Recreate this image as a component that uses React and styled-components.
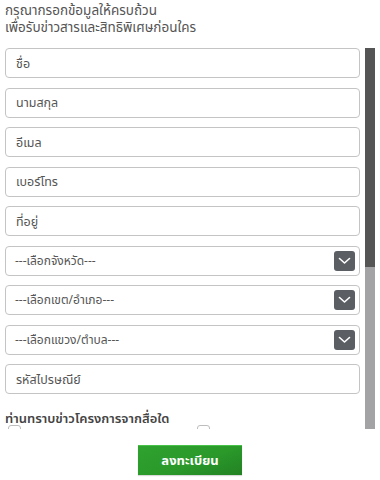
import styled, { createGlobalStyle } from "styled-components";

const GlobalStyle = createGlobalStyle`
  html, body {
    margin: 0;
    padding: 0;
    background: #ffffff;
  }
  body {
    font-family: "Noto Sans", "Noto Sans Thai", Tahoma, sans-serif;
    color: #555555;
  }
`;

const Page = styled.div`
  width: 380px;
  height: 480px;
  box-sizing: border-box;
  padding: 2px 5px 0 5px;
  display: flex;
  flex-direction: column;
  overflow: hidden;
`;

const Intro = styled.p`
  margin: 0 0 12px 0;
  font-size: 13.5px;
  line-height: 17px;
  color: #555555;
`;

const Scroller = styled.div`
  height: 381px;
  display: flex;
  gap: 5px;
`;

const Viewport = styled.div`
  flex: 1;
  overflow: hidden;
`;

const Track = styled.div`
  width: 10px;
  flex: none;
  background: #a3a3a6;
  display: flex;
  flex-direction: column;
`;

const Thumb = styled.div`
  height: 219px;
  background: #555555;
`;

const Form = styled.form`
  display: flex;
  flex-direction: column;
  gap: 9.5px;
`;

const Input = styled.input`
  box-sizing: border-box;
  width: 100%;
  height: 30px;
  border: 1px solid #c4c4c4;
  border-radius: 4px;
  padding: 0 10px;
  font-family: inherit;
  font-size: 12.5px;
  color: #555555;
  background: #ffffff;
  outline: none;

  &::placeholder {
    color: #555555;
  }
`;

const SelectBox = styled.div`
  box-sizing: border-box;
  height: 30px;
  border: 1px solid #c4c4c4;
  border-radius: 4px;
  padding: 0 4px 0 9px;
  display: flex;
  align-items: center;
  justify-content: space-between;
  font-size: 12px;
  color: #555555;
`;

const Arrow = styled.span`
  width: 21px;
  height: 20px;
  border-radius: 3px;
  background: #5b5f64;
  display: flex;
  align-items: center;
  justify-content: center;
`;

const Question = styled.div`
  margin-top: 5px;
  font-size: 13px;
  line-height: 18px;
  font-weight: 600;
  color: #444444;
`;

const Options = styled.div`
  display: grid;
  grid-template-columns: 189px 1fr;
  row-gap: 10px;
  padding-left: 3px;
  margin-top: -11px;
`;

const Option = styled.label`
  display: flex;
  align-items: flex-start;
  gap: 6px;
  font-size: 12px;
  line-height: 14px;
  color: #555555;
`;

const Box = styled.span`
  box-sizing: border-box;
  width: 13px;
  height: 13px;
  border: 1px solid #bdbdbd;
  border-radius: 3px;
  background: #ffffff;
`;

const Footer = styled.div`
  display: flex;
  justify-content: center;
  padding-top: 16px;
`;

const Submit = styled.button`
  width: 104px;
  height: 30px;
  border: none;
  border-top: 1px solid #49c249;
  background: linear-gradient(160deg, #2fa22f 0%, #2a992a 55%, #238223 100%);
  color: #ffffff;
  font-family: inherit;
  font-size: 13px;
  font-weight: 700;
  box-shadow: 0 1px 1px rgba(0, 0, 0, 0.15);
`;

const Chevron = () => (
  <svg width="13" height="8" viewBox="0 0 13 8">
    <path d="M1.5 1.5 L6.5 6 L11.5 1.5" fill="none" stroke="#ffffff" strokeWidth="1.6" strokeLinecap="round" strokeLinejoin="round" />
  </svg>
);

const fields = ["ชื่อ", "นามสกุล", "อีเมล", "เบอร์โทร", "ที่อยู่"];
const selects = ["---เลือกจังหวัด---", "---เลือกเขต/อำเภอ---", "---เลือกแขวง/ตำบล---"];
const media = ["", ""];

export default function App() {
  return (
    <>
      <GlobalStyle />
      <Page>
        <Intro>
          กรุณากรอกข้อมูลให้ครบถ้วน
          <br />
          เพื่อรับข่าวสารและสิทธิพิเศษก่อนใคร
        </Intro>
        <Scroller>
          <Viewport>
            <Form>
              {fields.map((f) => (
                <Input key={f} placeholder={f} />
              ))}
              {selects.map((s) => (
                <SelectBox key={s}>
                  {s}
                  <Arrow>
                    <Chevron />
                  </Arrow>
                </SelectBox>
              ))}
              <Input placeholder="รหัสไปรษณีย์" />
              <Question>ท่านทราบข่าวโครงการจากสื่อใด</Question>
              <Options>
                {media.map((m, i) => (
                  <Option key={i}>
                    <Box />
                    {m}
                  </Option>
                ))}
              </Options>
            </Form>
          </Viewport>
          <Track>
            <Thumb />
          </Track>
        </Scroller>
        <Footer>
          <Submit type="button">ลงทะเบียน</Submit>
        </Footer>
      </Page>
    </>
  );
}
